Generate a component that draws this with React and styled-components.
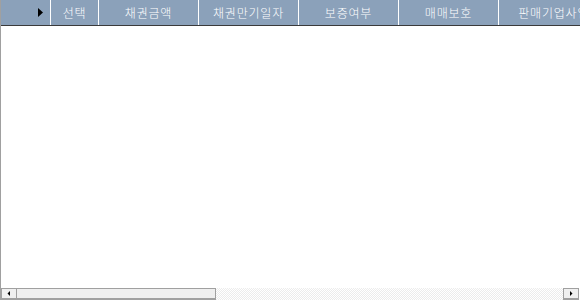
import React from "react";
import styled, { createGlobalStyle } from "styled-components";

const Global = createGlobalStyle`
  html, body { margin: 0; padding: 0; background: #ffffff; }
  body { font-family: "Noto Sans CJK KR", "Noto Sans", sans-serif; }
`;

const Grid = styled.div`
  width: 580px;
  height: 300px;
  box-sizing: border-box;
  border-left: 1px solid #a0a0a0;
  display: flex;
  flex-direction: column;
  overflow: hidden;
  background: #ffffff;
`;

const HeaderRow = styled.div`
  display: flex;
  height: 26px;
  box-sizing: border-box;
  background: #8ba1ba;
  border-bottom: 1px solid #3a3a3a;
  flex: none;
`;

const HeaderCell = styled.div`
  flex: none;
  width: ${(p) => p.$w}px;
  box-sizing: border-box;
  border-right: 1px solid #ffffff;
  color: #ffffff;
  font-size: 12px;
  font-weight: 300;
  letter-spacing: 0.8px;
  line-height: 25px;
  text-align: center;
  white-space: nowrap;
  overflow: hidden;
  display: flex;
  align-items: center;
  justify-content: ${(p) => (p.$indicator ? "flex-end" : "center")};
  padding-right: ${(p) => (p.$indicator ? "7px" : "0")};
`;

const Body = styled.div`
  flex: 1;
  background: #ffffff;
`;

const HScroll = styled.div`
  flex: none;
  height: 12px;
  display: flex;
  margin-right: 1px;
`;

const ScrollButton = styled.div`
  flex: none;
  width: 16px;
  box-sizing: border-box;
  background: #f0f0f0;
  border: 1px solid #a0a0a0;
  border-bottom-width: 2px;
  display: flex;
  align-items: center;
  justify-content: center;
`;

const Thumb = styled.div`
  flex: none;
  width: 199px;
  box-sizing: border-box;
  background: #efefef;
  border: 1px solid #a0a0a0;
  border-left: none;
  border-bottom-width: 2px;
`;

const Track = styled.div`
  flex: 1;
  background-color: #ffffff;
  background-image: repeating-conic-gradient(#ececec 0% 25%, #ffffff 0% 50%);
  background-size: 2px 2px;
`;

const Arrow = ({ dir }) => (
  <svg width="4" height="5" viewBox="0 0 4 5">
    {dir === "left" ? (
      <polygon points="3,0 3,5 0.5,2.5" fill="#000" />
    ) : (
      <polygon points="1,0 1,5 3.5,2.5" fill="#000" />
    )}
  </svg>
);

const columns = [
  { label: "선택", w: 48 },
  { label: "채권금액", w: 100 },
  { label: "채권만기일자", w: 100 },
  { label: "보증여부", w: 100 },
  { label: "매매보호", w: 100 },
  { label: "판매기업사업자번호", w: 146 },
];

export default function App() {
  return (
    <>
      <Global />
      <Grid>
        <HeaderRow>
          <HeaderCell $w={50} $indicator>
            <svg width="5" height="9" viewBox="0 0 5 9">
              <polygon points="0,0 5,4.5 0,9" fill="#000" />
            </svg>
          </HeaderCell>
          {columns.map((c) => (
            <HeaderCell key={c.label} $w={c.w}>
              {c.label}
            </HeaderCell>
          ))}
        </HeaderRow>
        <Body />
        <HScroll>
          <ScrollButton>
            <Arrow dir="left" />
          </ScrollButton>
          <Thumb />
          <Track />
          <ScrollButton>
            <Arrow dir="right" />
          </ScrollButton>
        </HScroll>
      </Grid>
    </>
  );
}
